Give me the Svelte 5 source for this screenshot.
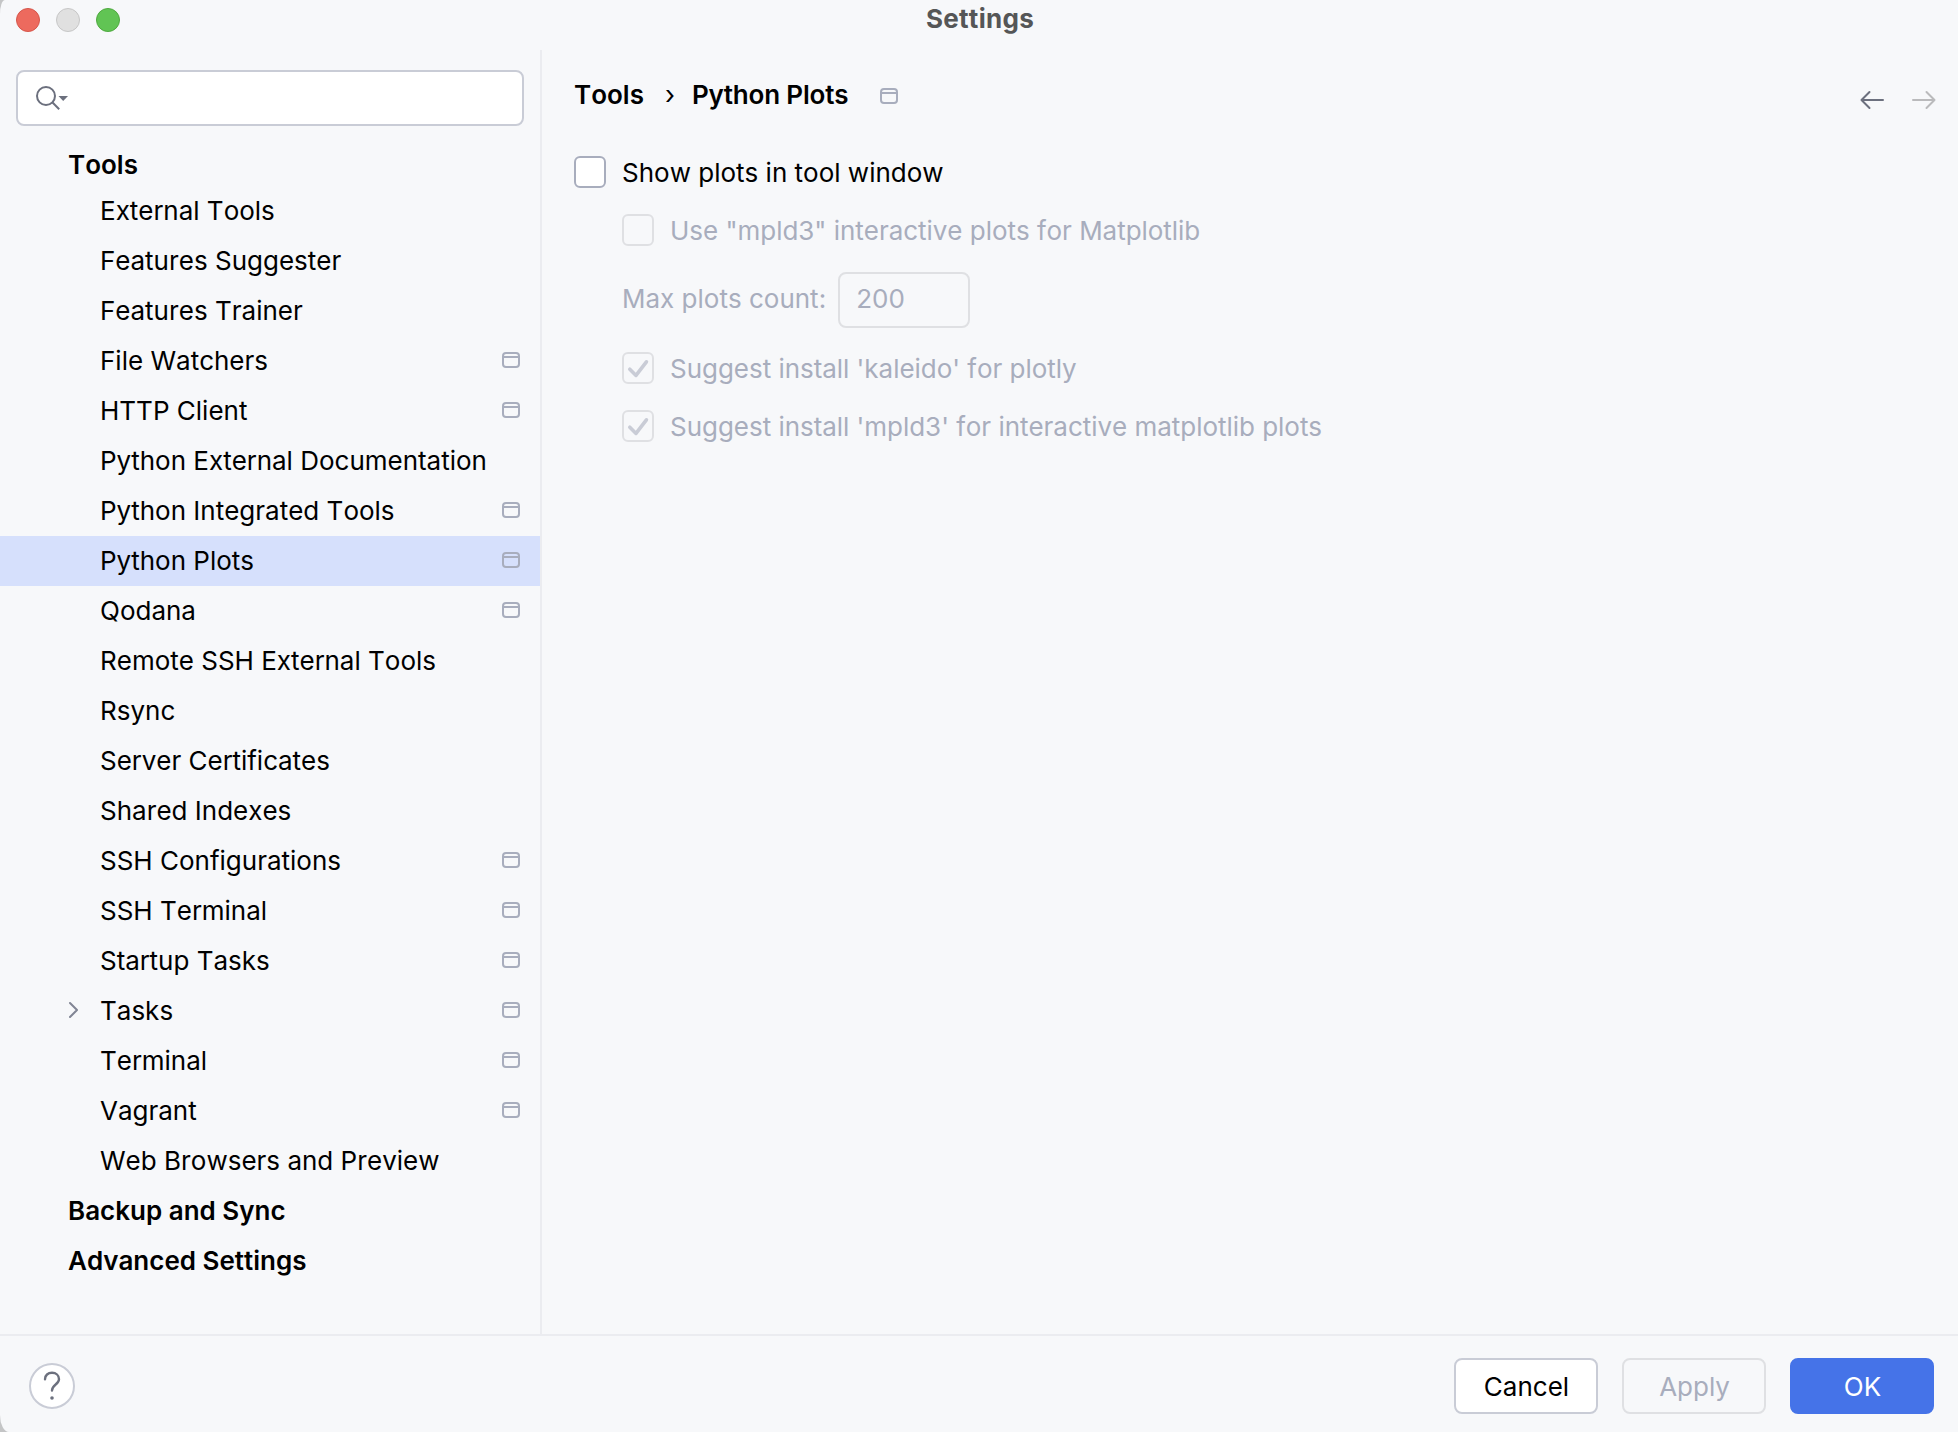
<script>
  const items = [
    { name: 'External Tools' },
    { name: 'Features Suggester' },
    { name: 'Features Trainer' },
    { name: 'File Watchers', project: true },
    { name: 'HTTP Client', project: true },
    { name: 'Python External Documentation' },
    { name: 'Python Integrated Tools', project: true },
    { name: 'Python Plots', project: true },
    { name: 'Qodana', project: true },
    { name: 'Remote SSH External Tools' },
    { name: 'Rsync' },
    { name: 'Server Certificates' },
    { name: 'Shared Indexes' },
    { name: 'SSH Configurations', project: true },
    { name: 'SSH Terminal', project: true },
    { name: 'Startup Tasks', project: true },
    { name: 'Tasks', project: true, expandable: true },
    { name: 'Terminal', project: true },
    { name: 'Vagrant', project: true },
    { name: 'Web Browsers and Preview' }
  ];
  let selected = $state('Python Plots');
</script>

{#snippet projectIcon()}
  <svg class="project-icon" width="18" height="16" viewBox="0 0 18 16" fill="none" stroke="#a8adbd" stroke-width="2">
    <rect x="1" y="1" width="16" height="14" rx="3" />
    <path d="M1 5H17" />
  </svg>
{/snippet}

{#snippet check(label, checked)}
  <div class="option disabled">
    <span class="box">
      {#if checked}
        <svg width="28" height="28" viewBox="0 0 28 28" fill="none" stroke="#c9ccd6" stroke-width="3.6" stroke-linecap="round" stroke-linejoin="round">
          <path d="M5.8 15.2L12 21.4L22.4 7.8" />
        </svg>
      {/if}
    </span>
    <span class="label">{label}</span>
  </div>
{/snippet}

<div class="window">
  <header class="titlebar">
    <div class="lights"><i class="red"></i><i class="grey"></i><i class="green"></i></div>
    <h1>Settings</h1>
  </header>

  <div class="body">
    <aside>
      <div class="search">
        <svg width="34" height="26" viewBox="0 0 34 26" fill="none" stroke="#6c707e" stroke-width="2">
          <circle cx="11" cy="11" r="9" />
          <path d="M17.3 17.3L24.2 24.2" />
          <path d="M23.5 11H33L28.2 16Z" fill="#6c707e" stroke="none" />
        </svg>
      </div>
      <nav>
        <div class="row group first">Tools</div>
        {#each items as item}
          <div class="row item" class:selected={item.name === selected}>
            <span class="twisty">
              {#if item.expandable}
                <svg width="10" height="18" viewBox="0 0 10 18" fill="none" stroke="#818594" stroke-width="2" stroke-linecap="round" stroke-linejoin="round">
                  <path d="M2 2L9 9L2 16" />
                </svg>
              {/if}
            </span>
            <span class="name">{item.name}</span>
            {#if item.project}{@render projectIcon()}{/if}
          </div>
        {/each}
        <div class="row group">Backup and Sync</div>
        <div class="row group">Advanced Settings</div>
      </nav>
    </aside>

    <main>
      <div class="top">
        <div class="crumbs">
          <span>Tools</span>
          <span class="sep">›</span>
          <span class="current">Python Plots</span>
          {@render projectIcon()}
        </div>
        <div class="history">
          <svg width="24" height="20" viewBox="0 0 24 20" fill="none" stroke="#6c707e" stroke-width="2" stroke-linecap="round" stroke-linejoin="round">
            <path d="M23 10H1.5M9.5 2L1.5 10L9.5 18" />
          </svg>
          <svg width="24" height="20" viewBox="0 0 24 20" fill="none" stroke="#bababc" stroke-width="2" stroke-linecap="round" stroke-linejoin="round">
            <path d="M1 10H22.5M14.5 2L22.5 10L14.5 18" />
          </svg>
        </div>
      </div>

      <div class="option">
        <span class="box"></span>
        <span class="label">Show plots in tool window</span>
      </div>
      <div class="nested">
        {@render check('Use "mpld3" interactive plots for Matplotlib', false)}
        <div class="count">
          <span class="count-label">Max plots count:</span>
          <span class="field">200</span>
        </div>
        {@render check("Suggest install 'kaleido' for plotly", true)}
        {@render check("Suggest install 'mpld3' for interactive matplotlib plots", true)}
      </div>
    </main>
  </div>

  <footer>
    <div class="help">
      <svg width="18" height="30" viewBox="0 0 18 30" fill="none" stroke="#6c707e" stroke-width="2.4" stroke-linecap="round" stroke-linejoin="round">
        <path d="M2 8.2C2 4.2 5 1.8 9 1.8S16 4.4 16 8.2C16 13.5 9 13.5 9 19.5" />
        <circle cx="9" cy="27" r="1.8" fill="#6c707e" stroke="none" />
      </svg>
    </div>
    <div class="buttons">
      <div class="btn">Cancel</div>
      <div class="btn off">Apply</div>
      <div class="btn primary">OK</div>
    </div>
  </footer>
</div>

<style>
  :global(body) {
    background: #c4c5c6;
    overflow: hidden;
  }
  .window {
    box-sizing: border-box;
    width: 1958px;
    height: 1432px;
    display: flex;
    flex-direction: column;
    background: #f7f8fa;
    border-radius: 5px 0 0 9px / 14px 0 0 17px;
    overflow: hidden;
    font-family: Inter, sans-serif;
    font-size: 26px;
    line-height: 32px;
    font-kerning: none;
    color: #000;
    white-space: nowrap;
  }
  .titlebar {
    flex: none;
    height: 50px;
    display: grid;
    grid-template-columns: 1fr auto 1fr;
    align-items: start;
  }
  .lights {
    display: flex;
    gap: 16px;
    padding: 8px 0 0 16px;
  }
  .lights i {
    box-sizing: border-box;
    width: 24px;
    height: 24px;
    border-radius: 50%;
    border-width: 1px;
    border-style: solid;
  }
  .red { background: #ed6a5e; border-color: #d5564b; }
  .grey { background: #e0e0e0; border-color: #c6c6c6; }
  .green { background: #61c454; border-color: #4fa93f; }
  h1 {
    margin: 3px 0 0 2px;
    font-size: 26px;
    line-height: 32px;
    font-weight: 700;
    letter-spacing: 0.3px;
    color: #555657;
  }
  .body {
    flex: 1;
    min-height: 0;
    display: flex;
  }
  aside {
    box-sizing: border-box;
    flex: none;
    width: 542px;
    border-right: 2px solid #ebecf0;
    padding-top: 20px;
  }
  .search {
    box-sizing: border-box;
    height: 56px;
    margin: 0 16px;
    padding-left: 17px;
    display: flex;
    align-items: center;
    background: #fff;
    border: 2px solid #c9ccd6;
    border-radius: 8px;
  }
  nav { padding-top: 14px; }
  .row {
    height: 50px;
    display: flex;
    align-items: center;
  }
  .group {
    padding-left: 68px;
    font-weight: 600;
  }
  .first { margin-bottom: -4px; }
  .item { padding-right: 20px; }
  .selected { background: #d6e0fc; }
  .twisty {
    display: flex;
    width: 32px;
    padding-left: 68px;
    padding-bottom: 2px;
  }
  .name { flex: 1; }
  .item .project-icon { margin-bottom: 2px; }
  main {
    flex: 1;
    padding: 0 22px 0 32px;
  }
  .top {
    height: 106px;
    display: flex;
    justify-content: space-between;
  }
  .crumbs {
    display: flex;
    align-items: center;
    height: 32px;
    padding-top: 29px;
    font-weight: 600;
  }
  .sep {
    box-sizing: border-box;
    width: 48px;
    padding-left: 4px;
    text-align: center;
    font-weight: 400;
  }
  .current { letter-spacing: -0.15px; }
  .crumbs .project-icon { margin: 2px 0 0 32px; }
  .history {
    display: flex;
    gap: 28px;
    padding-top: 40px;
  }
  .option {
    display: flex;
    align-items: center;
    gap: 16px;
    height: 32px;
  }
  .label { padding-top: 2px; }
  .box {
    box-sizing: border-box;
    width: 32px;
    height: 32px;
    background: #fff;
    border: 2px solid #a8adbd;
    border-radius: 6px;
  }
  .disabled .box {
    background: none;
    border-color: #dfe0e3;
  }
  .disabled .label { letter-spacing: -0.03px; }
  .box svg { display: block; }
  .nested {
    padding: 26px 0 0 48px;
    display: flex;
    flex-direction: column;
    color: #a8adbd;
  }
  .nested .option + .option { margin-top: 26px; }
  .count {
    display: flex;
    align-items: center;
    height: 56px;
    margin: 26px 0 24px;
    gap: 12px;
  }
  .count-label { padding-bottom: 2px; }
  .field {
    box-sizing: border-box;
    width: 132px;
    height: 56px;
    padding-left: 16px;
    line-height: 50px;
    border: 2px solid #dfe0e3;
    border-radius: 8px;
  }
  footer {
    box-sizing: border-box;
    flex: none;
    height: 98px;
    border-top: 2px solid #ebecf0;
    padding: 22px 24px 0 29px;
    display: flex;
    justify-content: space-between;
  }
  .help {
    box-sizing: border-box;
    width: 46px;
    height: 46px;
    margin-top: 5px;
    border: 2px solid #c9ccd6;
    border-radius: 50%;
    background: #fff;
    display: flex;
    align-items: center;
    justify-content: center;
  }
  .buttons {
    display: flex;
    gap: 24px;
  }
  .btn {
    box-sizing: border-box;
    width: 144px;
    height: 56px;
    padding-left: 1px;
    line-height: 53px;
    text-align: center;
    border: 2px solid #c9ccd6;
    border-radius: 8px;
    background: #fff;
  }
  .off {
    background: none;
    border-color: #dfe0e3;
    color: #a8adbd;
  }
  .primary {
    background: #4573e8;
    border-color: #4573e8;
    color: #fff;
  }
</style>
